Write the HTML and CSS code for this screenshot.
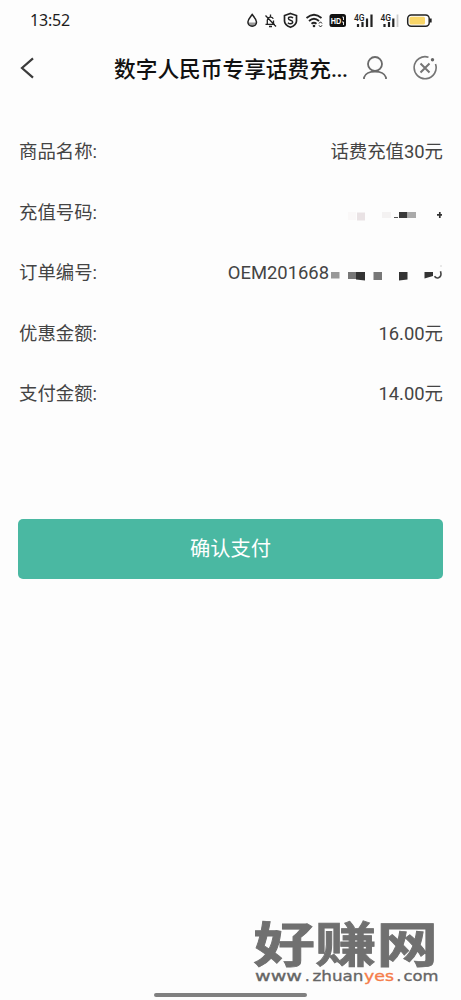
FILE: index.html
```
<!DOCTYPE html>
<html lang="zh-CN">
<head>
<meta charset="utf-8">
<meta name="viewport" content="width=device-width">
<title>话费充值</title>
<link rel="stylesheet" href="styles.css">
</head>
<body>
<div class="screen">
  <div class="status">
    <span class="time">13:52</span>
    <svg class="status-icons" width="190" height="20" viewBox="245 10 190 20" fill="none" stroke="#222" stroke-width="1.5">
      <path d="M252.200 14.500C250.500 17 247.900 19.300 247.900 22a4.300 4.300 0 0 0 8.600 0C256.500 19.300 253.900 17 252.200 14.500Z"/>
      <path d="M248 22.500h8.500c-.5 5-8 5-8.500 0Z" fill="#222" stroke="none" opacity=".45"/>
      <path d="M265.500 24.300h9.500M267.300 24v-4a3.200 3.200 0 0 1 6-1.200M273.500 20.500v3.500M269 26.500h3M270.500 14.500v2M265.500 15.500l10.500 11" stroke-width="1.3"/>
      <path d="M290.500 13.500l6 2v5.500q0 4-6 6.300-6-2.300-6-6.300v-5.500Z" stroke-width="1.700"/>
      <path d="M293 18q-1-1-2.600-1-2 0-2 1.600 0 1.300 2 1.600 2.300.4 2.300 1.900 0 1.700-2.300 1.700-1.500 0-2.500-1.100" stroke-width="1.400"/>
      <path d="M306.500 18q7.500-6.500 15 0M309 21q5-4.500 10 0M311.500 23.700q2.500-2 5 0" stroke-width="1.800"/>
      <circle cx="314" cy="26" r="1.300" fill="#222" stroke="none"/>
      <path d="M319 23.500l1.500-1.700 1.500 1.700M319 25.300l1.500 1.700 1.500-1.700" stroke-width="1"/>
      <rect x="329.500" y="14" width="16.500" height="13" rx="2.500" fill="#111" stroke="none"/>
      <text class="hd" x="330.800" y="23.800" textLength="10.500" lengthAdjust="spacingAndGlyphs">HD</text>
      <path d="M342.300 17h1.200v3M342 22h1.500v3" stroke="#fff" stroke-width=".9"/>
      <text class="net" x="354" y="20.500">4G</text>
      <path d="M358 24v3M362.500 22v5M367 18.500v8.500M371.500 14.500v12.500" stroke-width="2.200"/>
      <text class="net" x="380.500" y="20.500">4G</text>
      <path d="M384.500 24v3M389 22v5M393.300 18.500v8.500" stroke-width="2.200"/>
      <path d="M397.500 14.500v12.500" stroke="#ccc" stroke-width="1.800"/>
      <rect x="407.700" y="15" width="21.500" height="11.300" rx="3.500" stroke-width="1.500"/>
      <rect x="409.500" y="16.800" width="15.500" height="7.800" rx="1.500" fill="#f8d568" stroke="none"/>
      <path d="M430.800 18.500v4" stroke-width="1.700"/>
    </svg>
  </div>
  <header class="nav">
    <svg class="back" width="16" height="24" viewBox="0 0 16 24" fill="none" stroke="#3b3b3b" stroke-width="2.200"><path d="M14 2.300L3 12l11 9.700"/></svg>
    <h1 class="title">数字人民币专享话费充<span class="dots">...</span></h1>
    <svg class="user" width="26" height="26" viewBox="0 0 26 26" fill="none" stroke="#6a6a6a" stroke-width="1.800"><circle cx="13" cy="9" r="7"/><path d="M2 24v-1.500C4 14.500 22 14.500 24 22.500V24"/></svg>
    <svg class="close" width="26" height="26" viewBox="0 0 26 26" fill="none" stroke="#757575" stroke-width="1.600"><path d="M16.500 2.200A11 11 0 1 0 23.500 9"/><path d="M8.500 8.500l9 9M17.500 8.500l-9 9" stroke-width="2"/><circle cx="20.500" cy="4.700" r="1.700" fill="#666" stroke="none"/></svg>
  </header>
  <main class="details">
    <div class="row"><span>商品名称:</span><span>话费充值30元</span></div>
    <div class="row"><span>充值号码:</span>
      <svg width="106" height="20" viewBox="337 203 106 20">
        <path d="M348 212h8v8h-8Z" fill="#faf8f8"/><path d="M357 212.500h8v8h-8Z" fill="#e9e2e4"/><path d="M382 212h9v6h-9Z" fill="#f4f2f2"/>
        <path d="M394 217h4v1h-4Z" fill="#555"/><path d="M399 212h8.500v6H399Z" fill="#393939"/><path d="M407.500 212h8.500v6h-8.500Z" fill="#aaa"/><path d="M437 214.800h5M439.800 212v6" stroke="#333" stroke-width="1.700"/>
      </svg>
    </div>
    <div class="row"><span>订单编号:</span><span class="order">OEM201668
      <svg width="114" height="24" viewBox="329 261 114 24">
        <path d="M331 272h8.500v6.500H331Z" fill="#999"/><path d="M348 272h8.500v7H348Z" fill="#777"/><path d="M356 272h9v8.500l-9-1Z" fill="#333"/><path d="M373.500 272h8.500v8h-8.500Z" fill="#777"/><path d="M399 272h8.500v7.500l-8.500 1Z" fill="#333"/><path d="M424.500 272h8.500v4l-8.500 2.500Z" fill="#333"/>
        <path d="M434.500 276.300q1.500 2.200 4 1.500 3.500-1.300 2-6.500" fill="none" stroke="#444" stroke-width="1.600"/><path d="M441 265.500v1" stroke="#aaa"/>
      </svg></span>
    </div>
    <div class="row"><span>优惠金额:</span><span>16.00元</span></div>
    <div class="row"><span>支付金额:</span><span>14.00元</span></div>
  </main>
  <button class="pay">确认支付</button>
  <div class="mark">
    <svg class="mark-top" width="190" height="56" viewBox="251 914 190 56">
      <text class="mark-name" transform="translate(253.500 962.300) scale(1.280 1)" x="0" y="0" textLength="144" lengthAdjust="spacingAndGlyphs">好赚网</text>
    </svg>
    <svg class="mark-bottom" width="190" height="18" viewBox="251 970 190 18">
      <text class="mark-url" x="255" y="980.800" textLength="47" lengthAdjust="spacingAndGlyphs">www</text>
      <text class="mark-url" x="305" y="980.800">.</text>
      <text class="mark-url" x="312.500" y="980.800" textLength="51" lengthAdjust="spacingAndGlyphs">zhuan</text>
      <text class="mark-url accent" x="364" y="980.800" textLength="30" lengthAdjust="spacingAndGlyphs">yes</text>
      <text class="mark-url" x="396.500" y="980.800">.</text>
      <text class="mark-url" x="403.500" y="980.800" textLength="35" lengthAdjust="spacingAndGlyphs">com</text>
    </svg>
  </div>
  <div class="home"></div>
</div>
</body>
</html>
```
FILE: styles.css
```
* { box-sizing: border-box; }
body { margin: 0; background: #fdfdfd; color: #444; font-family: Roboto, "Noto Sans CJK SC", sans-serif; }
.screen { position: relative; width: 461px; height: 1000px; overflow: hidden; }
.status { display: flex; justify-content: space-between; align-items: center; height: 40px; padding: 0 26px 0 30px; }
.time { font: 400 16px/20px "Noto Sans", sans-serif; color: #1c1c1c; letter-spacing: -.2px; }
.hd { font: 700 8.500px "Liberation Sans", sans-serif; fill: #fff; stroke: none; }
.net { font: 500 8.500px Roboto, sans-serif; fill: #222; stroke: none; }
.nav { display: flex; align-items: center; height: 58px; padding: 0 23px 1px 19px; }
.nav svg { margin-bottom: 2px; }
.title { margin: 0 0 0 79px; width: 248px; white-space: nowrap; color: #111; font: 500 21.700px/32px "Noto Sans CJK SC", sans-serif; }
.dots { font-family: Roboto, sans-serif; letter-spacing: -.5px; }
.close { margin-left: auto; }
.details { padding: 24px 18px 0 19px; }
.row { display: flex; justify-content: space-between; align-items: center; height: 60.500px; font-size: 18.400px; line-height: 28px; white-space: nowrap; }
.order { display: flex; align-items: center; }
.pay { display: block; width: 425px; height: 60px; margin: 94.500px 18px 0; padding: 0 0 4px; border: 0; border-radius: 5px; background: #4ab8a2; color: #fff; font: 400 20.300px/30px "Noto Sans CJK SC", sans-serif; }
.mark { position: absolute; left: 251px; top: 914px; display: flex; flex-direction: column; }
.mark svg { display: block; overflow: visible; }
.mark-name { font: 700 48px "Noto Sans CJK SC", sans-serif; fill: #707070; stroke: #707070; stroke-width: .8px; }
.mark-url { font: 400 14.500px "DejaVu Sans", sans-serif; fill: #666; stroke: #666; stroke-width: .35px; }
.mark-url.accent { fill: #f57c4a; stroke: #f57c4a; }
.home { position: absolute; left: 154px; bottom: 3px; width: 153px; height: 4px; border-radius: 2px; background: #808080; }
```
